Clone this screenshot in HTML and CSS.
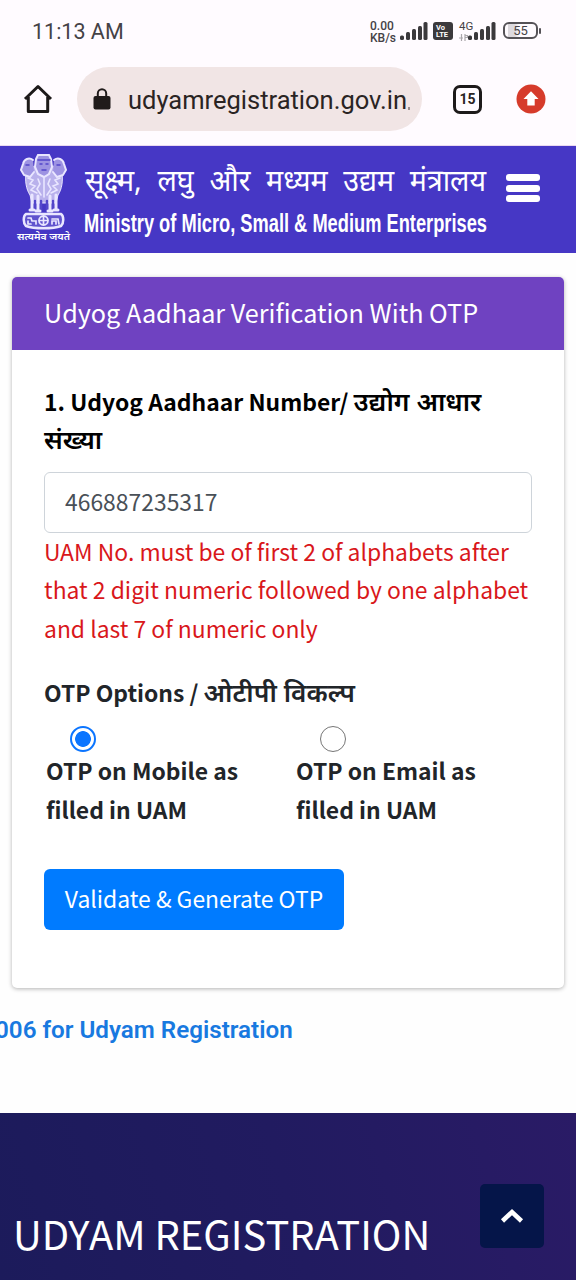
FILE: index.html
```html
<!DOCTYPE html>
<html lang="en">
<head>
<meta charset="utf-8">
<meta name="viewport" content="width=device-width">
<title>Udyam Registration</title>
<link rel="stylesheet" href="styles.css">
</head>
<body>
<div class="chrome">
  <div class="status">
    <span class="clock">11:13 AM</span>
    <div class="indicators">
      <span class="speed"><span>0.00</span><span>KB/s</span></span>
      <svg class="signal-a" width="28" height="18" viewBox="0 0 28 18"><g fill="#3b393c"><rect x="0" y="13.500" width="4" height="4.500" rx="1.500"/><rect x="6" y="10" width="4" height="8" rx="1.500"/><rect x="12" y="7" width="4" height="11" rx="1.500"/><rect x="18" y="4" width="4" height="14" rx="1.500"/><rect x="23.500" y="0" width="4" height="18" rx="1.500"/></g></svg>
      <span class="volte"><span>Vo</span><span>LTE</span></span>
      <span class="network"><span>4G</span>
        <svg width="9" height="7" viewBox="0 0 9 7"><path d="M2.500 0v7M0 4h4M6 7V0M6 1.500h2.500v2H6" fill="none" stroke="#aaa7ab" stroke-width="1.200"/></svg>
      </span>
      <svg class="signal-b" width="28" height="18" viewBox="0 0 28 18"><g fill="#3b393c"><rect x="0" y="13.500" width="4" height="4.500" rx="1.500"/><rect x="6" y="10" width="4" height="8" rx="1.500"/><rect x="12" y="7" width="4" height="11" rx="1.500"/><rect x="18" y="4" width="4" height="14" rx="1.500"/><rect x="23.500" y="0" width="4" height="18" rx="1.500"/></g></svg>
      <span class="battery">55</span><span class="battery-tip"></span>
    </div>
  </div>
  <div class="toolbar">
    <svg class="home" width="30" height="30" viewBox="0 0 30 30"><path d="M2 15 15 2.500 28 15M5.300 13v14.500h19.400V13" fill="none" stroke="#1d1a1a" stroke-width="3" stroke-linejoin="round"/></svg>
    <div class="address">
      <svg width="18" height="22" viewBox="0 0 18 22"><rect x="0.500" y="8" width="17" height="13.500" rx="2" fill="#201b1a"/><path d="M4.800 9V5.500a4.200 4.200 0 0 1 8.400 0V9" fill="none" stroke="#201b1a" stroke-width="2"/></svg>
      <span class="url">udyamregistration.gov.in</span><span class="url-cut"></span>
    </div>
    <span class="tabs">15</span>
    <svg class="update" width="30" height="30" viewBox="0 0 30 30"><circle cx="15" cy="15" r="14.500" fill="#d63b2b"/><path d="M15 7.200 22.500 15H18.700v6.500h-7.400V15H7.500z" fill="#fff"/></svg>
  </div>
</div>
<header class="masthead">
  <svg class="logo" width="490" height="107" viewBox="0 0 490 107" fill="#fff">
    <g class="emblem" fill="none" stroke="#e9e6ff" stroke-linecap="round">
      <path d="M36 20c-4 0-8 3-10 7-1 8 0 16 4 22l2 8h24l2-8c4-6 5-14 4-22-2-4-6-7-10-7z" fill="#b9b1ec" stroke-width="1"/>
      <path d="M38 9h11l2 4 1 8-3 7-5 3-6-3-3-7 1-8z" fill="#9d93e2" stroke-width="2"/>
      <path d="M33 14c-4-3-9-1-10 4l-2 6 3 5 6 2 4-5M54 14c4-3 9-1 10 4l2 6-3 5-6 2-4-5" fill="#9d93e2" stroke-width="2"/>
      <path d="M38 14h12M40 18h2M46 18h2M42 24h4M26 19h3M60 19h-3" stroke="#5346ca" stroke-width="1.500"/>
      <path d="M28 32l5 2-3 4 5 2-4 4 6 3M60 32l-5 2 3 4-5 2 4 4-6 3M44 32v19M38 33l2 5-3 5 4 6M50 33l-2 5 3 5-4 6" stroke-width="1.600"/>
      <path d="M35 55v9M41 55v9M47 55v9M53 55v9" stroke="#5346ca" stroke-width="2.500"/>
      <path d="M32 49v14M38 50v14M50 50v14M56 49v14" stroke-width="3"/>
      <path d="M30 64h4M36 65h4M48 65h4M54 64h4" stroke-width="3"/>
      <path d="M26 68c-3 2-3 9 0 12 8 3 27 3 35 0 3-3 3-10 0-12z" fill="#6053ce" stroke-width="2.500"/>
      <circle cx="43.500" cy="74.500" r="4.500" stroke-width="1.800"/>
      <path d="M39.500 74.500h8M43.500 70.500v8M28 72h3l1 3h4v3M28 75v3h3M52 73h6l1 5M52 78v-3h4v3" stroke-width="1.700"/>
    </g>
    <text class="motto" x="17" y="93.500" textLength="53" lengthAdjust="spacingAndGlyphs">सत्यमेव जयते</text>
    <text class="hindi" x="85" y="45" textLength="401" lengthAdjust="spacingAndGlyphs">सूक्ष्म, लघु और मध्यम उद्यम मंत्रालय</text>
    <text class="english" x="84" y="86" textLength="403" lengthAdjust="spacingAndGlyphs">Ministry of Micro, Small &amp; Medium Enterprises</text>
  </svg>
  <button class="menu" aria-label="Menu"><span></span><span></span><span></span></button>
</header>
<main>
  <section class="card">
    <h1 class="card-title">Udyog Aadhaar Verification With OTP</h1>
    <div class="card-body">
      <label class="field-label" for="uam">1. Udyog Aadhaar Number/ <span class="deva">उद्योग आधार<br>संख्या</span></label>
      <input class="field" id="uam" type="text" value="466887235317">
      <p class="error">UAM No. must be of first 2 of alphabets after<br>that 2 digit numeric followed by one alphabet<br>and last 7 of numeric only</p>
      <p class="options-title">OTP Options / <span class="deva">ओटीपी विकल्प</span></p>
      <div class="options">
        <label class="option"><span class="radio selected"></span><span>OTP on Mobile as<br>filled in UAM</span></label>
        <label class="option"><span class="radio"></span><span>OTP on Email as<br>filled in UAM</span></label>
      </div>
      <button class="submit">Validate &amp; Generate OTP</button>
    </div>
  </section>
  <p class="ticker"><span>006 for Udyam Registration</span></p>
</main>
<footer class="footer">
  <h2>UDYAM REGISTRATION</h2>
  <button class="to-top" aria-label="Back to top"><svg width="24" height="18" viewBox="0 0 24 18"><path d="M2.500 14 12 5l9.500 9" fill="none" stroke="#fff" stroke-width="4.500"/></svg></button>
</footer>
</body>
</html>
```
FILE: styles.css
```css
* { box-sizing: border-box; }
body { margin: 0; width: 576px; height: 1280px; overflow: hidden; display: flex; flex-direction: column; background: #fefefe; color: #212529; font: 22.9px/38.4px "Noto Sans CJK JP", "Noto Sans", sans-serif; }
p, h1, h2 { margin: 0; font-weight: 400; }
button { border: 0; padding: 0; font: inherit; }
svg { display: block; flex: none; }
.chrome { height: 146px; flex: none; background: #fffbff; border-bottom: 1px solid #ead9f0; font-family: Roboto, sans-serif; }
.status { height: 62px; display: flex; justify-content: space-between; padding: 0 35px 0 32px; }
.clock { font-size: 21.5px; line-height: 64px; color: #454246; }
.indicators { display: flex; padding-top: 20px; color: #454246; }
.speed { display: flex; flex-direction: column; width: 30px; font-size: 12px; font-weight: 500; line-height: 12px; }
.signal-a { margin-top: 2px; }
.volte { display: flex; flex-direction: column; width: 20px; height: 18px; margin: 2px 6px 0 5px; padding: 2px 3px; border-radius: 3px; background: #3b393c; color: #fff; font-size: 7.500px; font-weight: 700; line-height: 7px; }
.network { display: flex; flex-direction: column; width: 9px; font-size: 11.5px; line-height: 12px; white-space: nowrap; gap: 2px; }
.signal-b { margin-top: 2px; }
.battery { width: 35px; height: 17px; margin: 2px 1px 0 7px; border: 2px solid #555257; border-radius: 6px; font-size: 13px; line-height: 14px; text-align: center; background: linear-gradient(90deg, transparent 3px, #ddd9de 3px, #ddd9de 10px, transparent 14px); }
.battery-tip { width: 2px; height: 6px; margin-top: 8px; background: #555257; border-radius: 1px; }
.toolbar { display: flex; align-items: center; padding: 5px 30px 0 23px; }
.address { width: 345px; height: 64px; margin-left: 24px; padding-left: 16px; display: flex; align-items: center; border-radius: 32px; background: #f1e5e5; color: #2a2423; }
.url { margin-left: 17px; padding-top: 2px; font-size: 25.5px; }
.url-cut { width: 2px; height: 3px; margin: 18px 0 0 1px; background: #998f8f; }
.tabs { width: 29px; height: 29px; margin-left: 31px; border: 3px solid #1d1a1a; border-radius: 7px; font-size: 14px; font-weight: 700; line-height: 23px; text-align: center; color: #2a2423; }
.update { margin-left: 34px; }
.masthead { height: 107px; flex: none; display: flex; background: #4637c5; }
.motto { font: 600 10px "Noto Sans", sans-serif; }
.hindi { font: 400 31px "Noto Sans", sans-serif; word-spacing: 9px; }
.english { font: 700 25px "Liberation Sans", sans-serif; }
.menu { display: flex; flex-direction: column; gap: 3.5px; width: 34px; margin: 28px 0 0 16px; background: none; }
.menu span { height: 7px; border-radius: 3px; background: #fff; }
.card { width: 552px; height: 711px; margin: 24px 12px 0; border-radius: 5px; background: #fff; box-shadow: 0 1px 4px rgba(0,0,0,.3); }
.card-title { height: 73px; padding-left: 32px; border-radius: 5px 5px 0 0; background: #6f42c1; color: #fff; font-size: 25.2px; line-height: 70px; }
.card-body { padding: 32px 32px 0; }
.field-label { display: block; color: #000; font-weight: 700; }
.deva { font: 600 26.3px/20px "Noto Sans", sans-serif; }
.field { display: block; width: 488px; height: 61px; margin-top: 13px; padding: 0 20px 2px; border: 1.5px solid #ced4da; border-radius: 6px; color: #495057; font: inherit; }
.error { margin-top: -1px; color: #d9171b; white-space: nowrap; }
.options-title { margin-top: 26px; font-weight: 700; }
.options { display: flex; padding: 15px 0 0 2px; font-weight: 700; }
.option { flex: 0 0 250px; }
.radio { display: block; width: 26px; height: 26px; margin: 0 0 -1px 24px; border: 1.5px solid #767676; border-radius: 50%; }
.selected { border: 2px solid #0b75ff; background: radial-gradient(circle, #0b75ff 7.500px, #fff 8.200px); }
.submit { display: block; width: 300px; height: 61px; margin-top: 41px; padding-bottom: 3px; border-radius: 6px; background: #007bff; color: #fff; }
.ticker { margin-top: 23px; color: #1879e0; font: 600 24.2px/38px Roboto, sans-serif; overflow: hidden; white-space: nowrap; }
.ticker span { margin-left: -5px; }
.footer { flex: 1; margin-top: auto; max-height: 167px; display: flex; justify-content: space-between; padding: 71px 32px 0 13px; background: linear-gradient(75deg, #1c1b5b, #211b60 50%, #2a1b66); color: #fff; }
.footer h2 { margin: 24px 0 0; font-size: 39.9px; line-height: 50px; white-space: nowrap; }
.to-top { display: flex; align-items: center; justify-content: center; width: 64px; height: 64px; border-radius: 5px; background: #051549; }
```
